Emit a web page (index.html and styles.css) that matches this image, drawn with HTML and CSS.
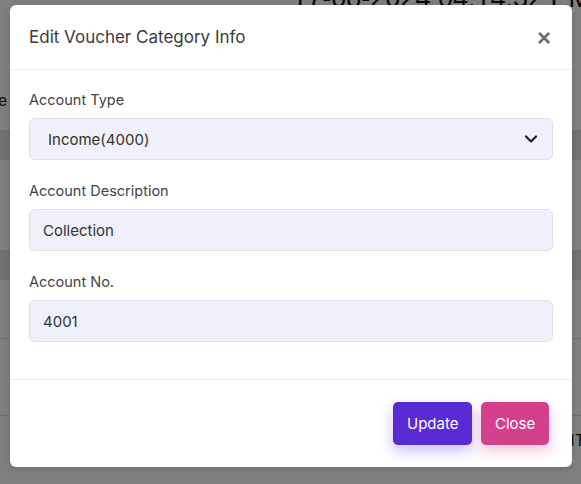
FILE: index.html
```html
<!DOCTYPE html>
<html>
<head>
<meta charset="utf-8">
<link rel="stylesheet" href="styles.css">
</head>
<body>
<div class="page">
  <div class="page-top">
    <span class="stamp">17-08-2024 04:14:32 PM</span>
  </div>
  <div class="page-label">Type</div>
  <div class="band band-dark"></div>
  <div class="band band-light"></div>
  <div class="band band-dark"></div>
  <div class="band band-gap"></div>
  <div class="band band-line"></div>
  <div class="band band-line band-last"><span class="edge-text">NT</span></div>
</div>
<div class="backdrop"></div>
<div class="modal">
  <div class="modal-header">
    <h5 class="modal-title">Edit Voucher Category Info</h5>
    <button class="btn-x" type="button">&times;</button>
  </div>
  <div class="modal-body">
    <div class="field">
      <label class="field-label">Account Type</label>
      <div class="select">
        <span class="select-value">Income(4000)</span>
        <svg class="chev" width="14" height="10" viewBox="0 0 14 10"><path d="M2 2.5 L7 7.5 L12 2.5" fill="none" stroke="#222" stroke-width="2.2" stroke-linecap="round" stroke-linejoin="round"/></svg>
      </div>
    </div>
    <div class="field">
      <label class="field-label">Account Description</label>
      <div class="input">Collection</div>
    </div>
    <div class="field">
      <label class="field-label">Account No.</label>
      <div class="input">4001</div>
    </div>
  </div>
  <div class="modal-footer">
    <button class="btn btn-update" type="button">Update</button>
    <button class="btn btn-close" type="button">Close</button>
  </div>
</div>
</body>
</html>
```
FILE: styles.css
```css
* { box-sizing: border-box; }
html, body { margin: 0; padding: 0; }
body {
  width: 581px;
  height: 484px;
  overflow: hidden;
  background: #fff;
  font-family: Inter, "Noto Sans", sans-serif;
  position: relative;
}
.page { display: flex; flex-direction: column; }
.page-top { height: 84px; display: flex; justify-content: flex-end; }
.stamp {
  font-size: 27px;
  color: #111;
  margin-top: -17px;
  margin-right: -10px;
  font-family: "Liberation Sans", sans-serif;
  white-space: nowrap;
}
.page-label { height: 46px; font-size: 15px; color: #222; padding-top: 7px; margin-left: -28px; }
.band { height: 30px; }
.band-dark { background: #e2e2e2; }
.band-light { height: 90px; background: #fff; }
.band-gap { height: 58px; }
.band-line { height: 77px; border-top: 1px solid #ddd; }
.band-last { position: relative; }
.edge-text { position: absolute; right: -4px; top: 14px; font-size: 16px; color: #111; }

.backdrop {
  position: absolute;
  inset: 0;
  background: rgba(0,0,0,0.5);
}
.modal {
  position: absolute;
  left: 10px;
  top: 5px;
  width: 562px;
  height: 462px;
  background: #fff;
  border-radius: 6px;
  display: flex;
  flex-direction: column;
  box-shadow: 0 2px 6px rgba(0,0,0,0.15);
}
.modal-header {
  height: 65px;
  display: flex;
  align-items: center;
  justify-content: space-between;
  padding: 0 19px;
  border-bottom: 1px solid #e9ecef;
}
.modal-title {
  margin: 0;
  font-size: 17px;
  font-weight: 400;
  color: #3a3a3a;
}
.btn-x {
  border: 0;
  background: none;
  padding: 0;
  font-size: 24px;
  font-weight: 700;
  color: #6c6c6c;
  line-height: 1;
  margin-right: 2px;
  margin-top: 2px;
  font-family: Arial, "Liberation Sans", sans-serif;
}
.modal-body {
  padding: 21px 19px 0;
  height: 310px;
  border-bottom: 1px solid #e9ecef;
}
.field { margin-bottom: 22px; }
.field-label {
  display: block;
  font-size: 14.5px;
  color: #444;
  margin-bottom: 9px;
  line-height: 18px;
}
.select, .input {
  height: 42px;
  background: #eff0f9;
  border: 1px solid #dde0e6;
  border-radius: 6px;
  display: flex;
  align-items: center;
  font-size: 15px;
  color: #333;
}
.select { padding: 0 14px 0 18px; justify-content: space-between; }
.input { padding: 0 13px; }
.chev { display: block; }
.modal-footer {
  flex: 1;
  display: flex;
  justify-content: flex-end;
  align-items: flex-start;
  gap: 9px;
  padding: 22px 23px 0;
}
.btn {
  border: 0;
  height: 43px;
  border-radius: 5px;
  color: #fff;
  font-size: 15px;
  font-family: Inter, "Noto Sans", sans-serif;
  padding: 0 14px;
}
.btn-update {
  width: 79px;
  background: #5a2bd5;
  box-shadow: 0 6px 14px rgba(90,43,213,0.3);
}
.btn-close {
  width: 68px;
  background: #d4408b;
  box-shadow: 0 6px 14px rgba(212,64,139,0.3);
}
```
